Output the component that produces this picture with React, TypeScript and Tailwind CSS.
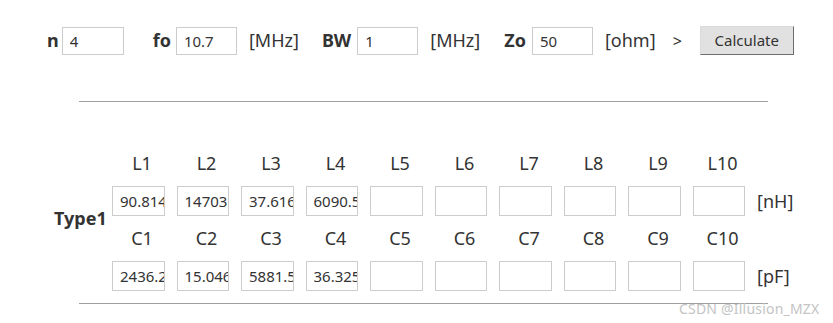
import React from 'react';

const font = { fontFamily: '"Noto Sans", "Open Sans", Arial, sans-serif' };

const lValues = ['90.814', '14703', '37.616', '6090.5', '', '', '', '', '', ''];
const cValues = ['2436.2', '15.046', '5881.5', '36.325', '', '', '', '', '', ''];

function Field({ value, className }: { value: string; className: string }) {
  return (
    <input
      readOnly
      value={value}
      className={`border border-[#cccccc] bg-white text-[15px] text-[#333] outline-none ${className}`}
    />
  );
}

export default function App() {
  const idx = Array.from({ length: 10 }, (_, i) => i);

  return (
    <div className="relative w-[833px] h-[323px] overflow-hidden bg-white text-[#333]" style={font}>
      {/* parameter row */}
      <div className="flex items-center pl-[47px] pt-[26px] h-[55px] text-[18px]">
        <span className="font-bold">n</span>
        <Field value="4" className="ml-[3px] w-[62px] h-[28px] pl-[7px]" />
        <span className="ml-[29px] font-bold">fo</span>
        <Field value="10.7" className="ml-[5px] w-[61px] h-[28px] pl-[7px]" />
        <span className="ml-[12px]">[MHz]</span>
        <span className="ml-[23px] font-bold">BW</span>
        <Field value="1" className="ml-[6px] w-[61px] h-[28px] pl-[7px]" />
        <span className="ml-[12px]">[MHz]</span>
        <span className="ml-[24px] font-bold">Zo</span>
        <Field value="50" className="ml-[6px] w-[61px] h-[28px] pl-[7px]" />
        <span className="ml-[12px]">[ohm]</span>
        <span className="ml-[17px] text-[16px]">&gt;</span>
        <button className="ml-[18px] w-[94px] h-[29px] bg-[#e1e1e1] border border-[#dadada] border-r-[#6e6e6e] border-b-[#6e6e6e] text-[15px] text-[#333]">
          Calculate
        </button>
      </div>

      <div className="ml-[79px] mt-[46px] w-[689px] h-px bg-[#a0a0a0]" />

      {/* result table */}
      <div className="ml-[54px] mt-[39px] grid grid-cols-[53.5px_repeat(10,60px)_auto] grid-rows-[45px_30px_45px_30px] gap-x-[4.5px] text-[18px]">
        <div className="row-span-4 flex items-center pt-[5px] font-bold">Type1</div>
        {idx.map((i) => (
          <div key={`l${i}`} className="flex items-center justify-center">L{i + 1}</div>
        ))}
        <div />
        {idx.map((i) => (
          <div key={`lv${i}`}>
            <Field value={lValues[i]} className="w-[52.5px] h-[30px] pl-[7px]" />
          </div>
        ))}
        <div className="flex items-center">[nH]</div>
        {idx.map((i) => (
          <div key={`c${i}`} className="flex items-center justify-center">C{i + 1}</div>
        ))}
        <div />
        {idx.map((i) => (
          <div key={`cv${i}`}>
            <Field value={cValues[i]} className="w-[52.5px] h-[30px] pl-[7px]" />
          </div>
        ))}
        <div className="flex items-center">[pF]</div>
      </div>

      <div className="ml-[79px] mt-[12px] w-[689px] h-px bg-[#a0a0a0]" />

      <div className="absolute left-[679px] top-[298px] text-[14px] text-[#c4c4c4] tracking-[0.2px]">
        CSDN @Illusion_MZX
      </div>
    </div>
  );
}
